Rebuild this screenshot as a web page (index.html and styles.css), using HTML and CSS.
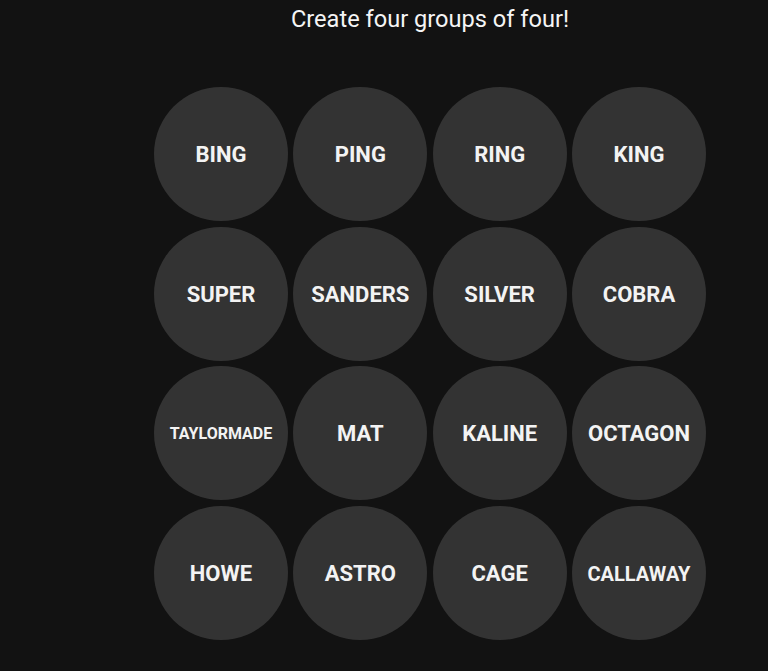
FILE: index.html
```html
<!DOCTYPE html>
<html lang="en">
<head>
<meta charset="utf-8">
<title>Connections</title>
<link rel="stylesheet" href="styles.css">
</head>
<body>
<main class="board">
  <h1 class="title">Create four groups of four!</h1>
  <div class="grid">
    <div class="tile">BING</div>
    <div class="tile">PING</div>
    <div class="tile">RING</div>
    <div class="tile">KING</div>
    <div class="tile">SUPER</div>
    <div class="tile">SANDERS</div>
    <div class="tile">SILVER</div>
    <div class="tile">COBRA</div>
    <div class="tile tile-xs">TAYLORMADE</div>
    <div class="tile">MAT</div>
    <div class="tile">KALINE</div>
    <div class="tile">OCTAGON</div>
    <div class="tile">HOWE</div>
    <div class="tile">ASTRO</div>
    <div class="tile">CAGE</div>
    <div class="tile tile-sm">CALLAWAY</div>
  </div>
</main>
</body>
</html>
```
FILE: styles.css
```css
html, body {
  margin: 0;
  padding: 0;
  background: #121212;
  height: 100%;
}
body {
  font-family: Roboto, "Liberation Sans", sans-serif;
  color: #f2f2f2;
  overflow: hidden;
}
.board {
  width: 552px;
  margin-left: 154px;
  padding-top: 5px;
}
.title {
  margin: 0;
  font-size: 23.6px;
  font-weight: 400;
  line-height: 28px;
  text-align: center;
  color: #f5f5f5;
}
.grid {
  margin-top: 54px;
  display: grid;
  grid-template-columns: repeat(4, 134px);
  grid-auto-rows: 134px;
  column-gap: 5.33px;
  row-gap: 5.5px;
}
.tile {
  box-sizing: border-box;
  width: 134px;
  height: 134px;
  padding-top: 2px;
  border-radius: 50%;
  background: #333333;
  display: flex;
  align-items: center;
  justify-content: center;
  font-size: 22px;
  font-weight: 700;
  line-height: 1;
  color: #f3f3f3;
}
.tile-sm {
  font-size: 20px;
}
.tile-xs {
  font-size: 16px;
}
```
